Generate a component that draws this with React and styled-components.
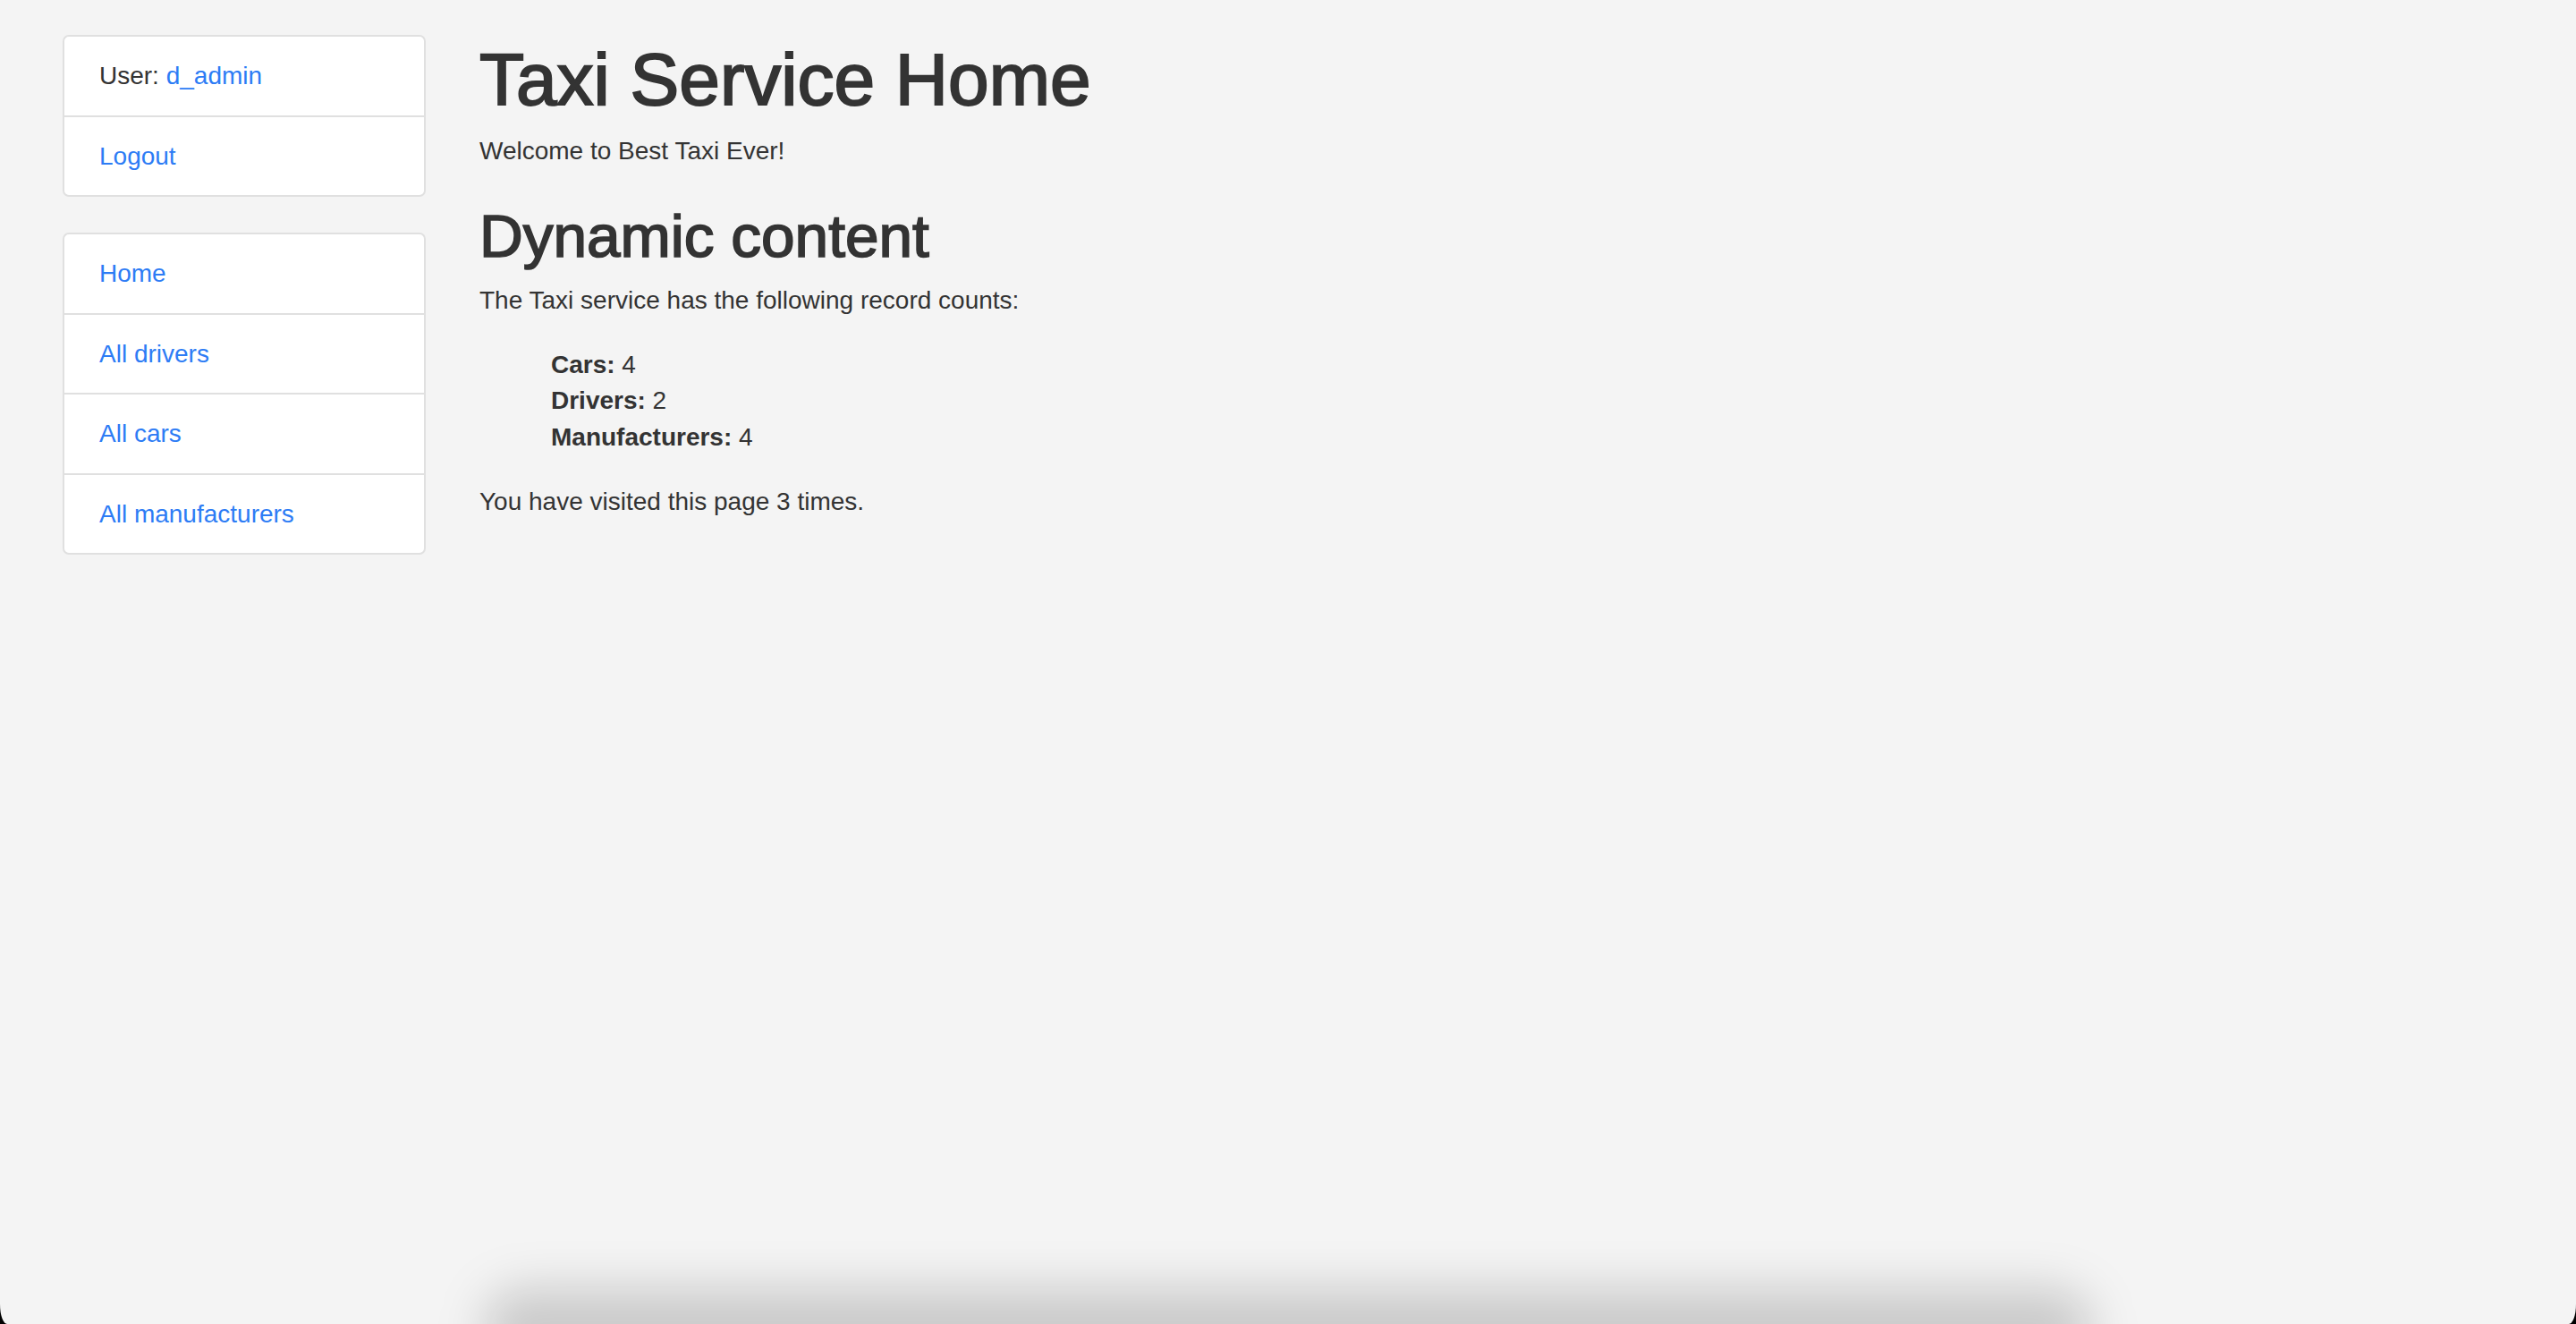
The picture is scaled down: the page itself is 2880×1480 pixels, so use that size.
import React from "react";
import styled, { createGlobalStyle } from "styled-components";

const GlobalStyle = createGlobalStyle`
  html, body {
    margin: 0;
    padding: 0;
    background: #f4f4f4;
  }
  body {
    font-family: "Liberation Sans", Arial, Helvetica, sans-serif;
    color: #333333;
    font-size: 28px;
    line-height: 40.5px;
  }
  * { box-sizing: border-box; }
`;

const Page = styled.div`
  position: relative;
  min-height: 100vh;
  display: flex;
  align-items: flex-start;
  gap: 60px;
  padding: 39px 0 0 70px;
  overflow: hidden;
`;

const Sidebar = styled.aside`
  width: 406px;
  flex-shrink: 0;
  display: flex;
  flex-direction: column;
  gap: 40px;
`;

const ListGroup = styled.ul`
  list-style: none;
  margin: 0;
  padding: 0;
  background: #ffffff;
  border: 2px solid #e0e0e0;
  border-radius: 7px;
  overflow: hidden;
`;

const ListItem = styled.li`
  padding: 24px 39px 23.5px;
  line-height: 40px;
  font-size: 28px;
  color: #333333;
  & + & {
    border-top: 2px solid #e0e0e0;
  }
`;

const Link = styled.a`
  color: #2d7cf5;
  text-decoration: none;
  cursor: pointer;
`;

const Main = styled.main`
  flex: 1;
  padding-top: 1px;
`;

const Title = styled.h1`
  margin: 0 0 12px;
  font-size: 82px;
  line-height: 97px;
  font-weight: 400;
  -webkit-text-stroke: 2px #333333;
  color: #333333;
`;

const SubTitle = styled.h2`
  margin: 34px 0 13px;
  font-size: 67.5px;
  line-height: 79px;
  font-weight: 400;
  -webkit-text-stroke: 1.7px #333333;
  color: #333333;
`;

const Text = styled.p`
  margin: 0;
  font-size: 28px;
  line-height: 40.5px;
  color: #333333;
`;

const Counts = styled.ul`
  list-style: none;
  margin: 31.5px 0 31.5px;
  padding: 0 0 0 80px;
`;

const CountItem = styled.li`
  font-size: 28px;
  line-height: 40.5px;
  color: #333333;
`;

const Label = styled.b`
  font-weight: 700;
`;

const DockShadow = styled.div`
  position: fixed;
  left: 540px;
  width: 1800px;
  bottom: -50px;
  height: 90px;
  border-radius: 45px;
  background: rgba(0, 0, 0, 0.17);
  filter: blur(26px);
  pointer-events: none;
`;

const Corner = styled.div`
  position: fixed;
  bottom: 0;
  ${(p) => (p.$side === "left" ? "left: 0;" : "right: 0;")}
  width: 10px;
  height: 22px;
  overflow: hidden;
  pointer-events: none;
  &::after {
    content: "";
    position: absolute;
    bottom: 0;
    ${(p) => (p.$side === "left" ? "left: 0;" : "right: 0;")}
    width: 40px;
    height: 60px;
    border-${(p) => (p.$side === "left" ? "bottom-left" : "bottom-right")}-radius: 8px 22px;
    box-shadow: 0 0 0 30px #000;
  }
`;

export default function App() {
  return (
    <>
      <GlobalStyle />
      <Page>
        <Sidebar>
          <ListGroup>
            <ListItem>
              User: <Link>d_admin</Link>
            </ListItem>
            <ListItem>
              <Link>Logout</Link>
            </ListItem>
          </ListGroup>
          <ListGroup>
            <ListItem>
              <Link>Home</Link>
            </ListItem>
            <ListItem>
              <Link>All drivers</Link>
            </ListItem>
            <ListItem>
              <Link>All cars</Link>
            </ListItem>
            <ListItem>
              <Link>All manufacturers</Link>
            </ListItem>
          </ListGroup>
        </Sidebar>
        <Main>
          <Title>Taxi Service Home</Title>
          <Text>Welcome to Best Taxi Ever!</Text>
          <SubTitle>Dynamic content</SubTitle>
          <Text>The Taxi service has the following record counts:</Text>
          <Counts>
            <CountItem>
              <Label>Cars:</Label> 4
            </CountItem>
            <CountItem>
              <Label>Drivers:</Label> 2
            </CountItem>
            <CountItem>
              <Label>Manufacturers:</Label> 4
            </CountItem>
          </Counts>
          <Text>You have visited this page 3 times.</Text>
        </Main>
        <DockShadow />
        <Corner $side="left" />
        <Corner $side="right" />
      </Page>
    </>
  );
}
